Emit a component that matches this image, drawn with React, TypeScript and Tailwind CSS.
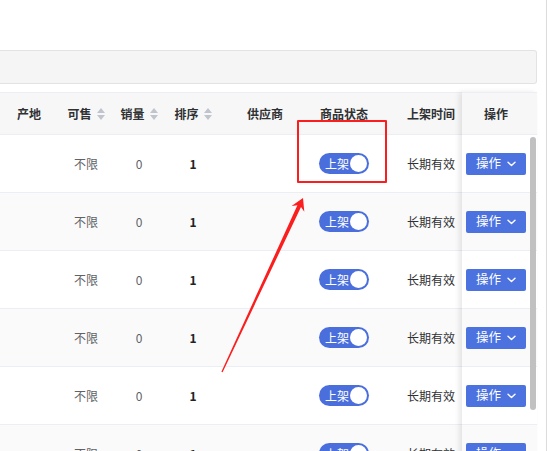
import React from "react";

const font = { fontFamily: '"Noto Sans CJK SC", "Liberation Sans", sans-serif' };

function SortIcon() {
  return (
    <span className="ml-[5px] inline-flex flex-col items-center gap-[2px]">
      <span className="block h-0 w-0 border-x-[4px] border-b-[5px] border-x-transparent border-b-[#c0c4cc]" />
      <span className="block h-0 w-0 border-x-[4px] border-t-[5px] border-x-transparent border-t-[#c0c4cc]" />
    </span>
  );
}

function Switch() {
  return (
    <div className="flex h-[21px] w-[50px] items-center justify-between rounded-full bg-[#4a6fdc] pl-[6px] pr-[2px]">
      <span className="text-[12px] leading-none text-white">上架</span>
      <span className="h-[17px] w-[17px] rounded-full bg-white" />
    </div>
  );
}

function OpButton() {
  return (
    <div className="flex h-[22px] w-[60px] items-center justify-center gap-[6px] rounded-[2px] bg-[#4b72de] text-white">
      <span className="text-[12.5px] leading-none">操作</span>
      <svg width="9" height="6" viewBox="0 0 9 6" fill="none">
        <path d="M1 1.2 L4.5 4.6 L8 1.2" stroke="white" strokeWidth="1.4" strokeLinecap="round" strokeLinejoin="round" />
      </svg>
    </div>
  );
}

const rows = [0, 1, 2, 3, 4, 5];

export default function App() {
  return (
    <div className="relative flex h-[451px] w-[554px] overflow-hidden bg-white text-[12px]" style={font}>
      <div className="flex w-[537px] flex-col">
        <div className="h-[50px] shrink-0" />
        <div className="h-[34px] shrink-0 rounded-r-[3px] border border-l-0 border-[#e3e3e3] bg-[#f5f5f5]" />
        <div className="h-[8px] shrink-0" />
        <div className="flex flex-1">
          {/* scrolling columns */}
          <div className="flex w-[462px] flex-col">
            <div className="flex h-[43px] items-center border-y border-[#ebeef5] bg-[#f7f7f8] font-bold text-[#303133]">
              <div className="w-[58px] text-center">产地</div>
              <div className="flex w-[56px] items-center justify-center">可售<SortIcon /></div>
              <div className="flex w-[50px] items-center justify-center">销量<SortIcon /></div>
              <div className="flex w-[58px] items-center justify-center">排序<SortIcon /></div>
              <div className="w-[86px] text-center">供应商</div>
              <div className="w-[72px] text-center">商品状态</div>
              <div className="w-[82px] pl-[27px]">上架时间</div>
            </div>
            {rows.map((r) => (
              <div
                key={r}
                className={`flex h-[58px] shrink-0 items-center border-b border-[#ebeef5] ${r % 2 === 1 ? "bg-[#fafafa]" : "bg-white"}`}
              >
                <div className="w-[58px]" />
                <div className="w-[56px] text-center text-[#606266]">不限</div>
                <div className="w-[50px] text-center text-[#606266]">0</div>
                <div className="w-[58px] text-center font-bold text-[#222]">1</div>
                <div className="w-[86px]" />
                <div className="flex w-[72px] justify-center"><Switch /></div>
                <div className="w-[82px] pl-[27px] text-[#303133]">长期有效</div>
              </div>
            ))}
          </div>
          {/* fixed column */}
          <div className="flex w-[75px] flex-col shadow-[-3px_0_5px_rgba(0,0,0,0.09)]">
            <div className="flex h-[43px] items-center justify-center border-y border-[#ebeef5] bg-[#f7f7f8] pr-[7px] font-bold text-[#303133]">
              操作
            </div>
            {rows.map((r) => (
              <div
                key={r}
                className={`flex h-[58px] shrink-0 items-center justify-center border-b border-[#ebeef5] pr-[7px] ${r % 2 === 1 ? "bg-[#fafafa]" : "bg-white"}`}
              >
                <OpButton />
              </div>
            ))}
          </div>
        </div>
      </div>
      <div className="w-[9px]" />
      <div className="w-px bg-[#dcdcdc]" />
      <div className="flex-1" />

      {/* scrollbar thumb (overlay) */}
      <div className="absolute left-[530px] top-[137px] h-[273px] w-[6px] rounded-full bg-[#c1c1c1]" />

      {/* annotation: red box */}
      <div className="absolute left-[297px] top-[120px] h-[63px] w-[90px] rounded-[1px] border-2 border-[#fb1e1e]" />

      {/* annotation: red arrow */}
      <svg className="absolute left-0 top-0" width="554" height="451" viewBox="0 0 554 451">
        <polygon
          fill="#fb1e1e"
          points="303,198 304.3,211.8 301,207 222.6,372.3 221.4,371.7 297.4,205.3 291.6,205.9"
        />
      </svg>
    </div>
  );
}
